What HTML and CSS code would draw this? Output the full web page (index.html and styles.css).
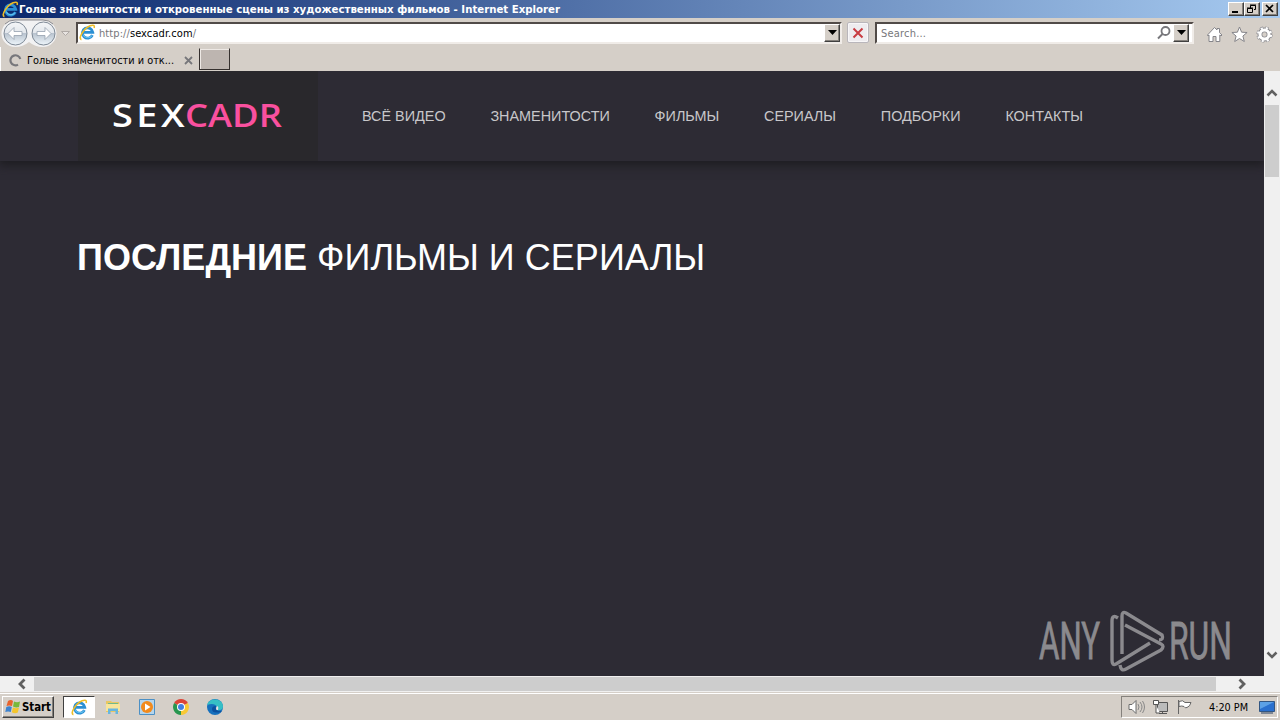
FILE: index.html
```html
<!DOCTYPE html>
<html lang="ru">
<head>
  <meta charset="UTF-8" />
  <title>Голые знаменитости и откровенные сцены из художественных фильмов</title>
  <link rel="stylesheet" href="styles.css">
</head>
<body>
  <svg class="sprite" width="0" height="0">
    <symbol id="ie" viewBox="0 0 16 16">
      <path d="M12.6 10.5A4.9 4.9 0 1 1 13 7.9H4.6" fill="none" stroke="#2b8fd3" stroke-width="2.6"/>
      <path d="M12.3 10.8A4.7 4.7 0 0 1 4 10" fill="none" stroke="#63c1ef" stroke-width="1"/>
      <path d="M2.3 14.7C-1.3 13.8 4.4 4.3 10.5 1.7c3.2-1.3 4.4-.4 3.7 2.1" fill="none" stroke="#edbd27" stroke-width="1.5"/>
    </symbol>
    <symbol id="down" viewBox="0 0 9 5"><path d="M0 0h9L4.500 5z"/></symbol>
  </svg>

  <div class="titlebar">
    <svg class="ie-icon" width="17" height="17"><use href="#ie"/></svg>
    <span class="window-title"><svg width="542" height="16"><text x="0" y="12" textLength="541" lengthAdjust="spacingAndGlyphs">Голые знаменитости и откровенные сцены из художественных фильмов - Internet Explorer</text></svg></span>
    <div class="window-buttons">
      <button><svg width="12" height="10"><path d="M2 8h6" stroke="#000" stroke-width="2"/></svg></button>
      <button><svg width="12" height="10"><path d="M4.500 4V1.500h5v4H8M4 1h6M1.500 4.500h5v4h-5zM1 4h6" fill="none" stroke="#000"/></svg></button>
      <button class="close"><svg width="12" height="10"><path d="M2 1l7 7M9 1L2 8" stroke="#000" stroke-width="1.7"/></svg></button>
    </div>
  </div>

  <div class="toolbar">
    <svg class="history" width="76" height="29" viewBox="0 0 76 29">
      <defs>
        <linearGradient id="glass" x2="0" y2="1"><stop stop-color="#f4f6f8"/><stop offset=".48" stop-color="#e3e7ec"/><stop offset=".5" stop-color="#b9c3cf"/><stop offset="1" stop-color="#eef6fb"/></linearGradient>
      </defs>
      <path d="M15 2h28a13 13 0 0 1 0 27q-8 0-14-5q-6 5-14 5a13 13 0 0 1 0-27z" fill="#f2f2f3"/>
      <path d="M5 6q4-4 10-4h28q6 0 10 4" fill="none" stroke="#8b8b91"/>
      <circle cx="15.500" cy="15.500" r="11.500" fill="url(#glass)" stroke="#7e8996"/>
      <circle cx="43.500" cy="15.500" r="11.500" fill="url(#glass)" stroke="#7e8996"/>
      <path d="M8 15.500l6-6v4h8v4h-8v4zM51 15.500l-6-6v4h-8v4h8v4z" fill="#fff" stroke="#96a1ae" stroke-width=".8"/>
      <path d="M61.500 13.500h8l-4 4z" fill="#e8e4e1" stroke="#b0aaa6"/>
    </svg>
    <div class="field address">
      <svg width="17" height="17"><use href="#ie"/></svg>
      <svg class="url" width="98" height="16"><text x="0" y="12" textLength="97"><tspan fill="#77777b">http://</tspan>sexcadr.com<tspan fill="#77777b">/</tspan></text></svg>
      <button class="drop"><svg width="9" height="5"><use href="#down"/></svg></button>
    </div>
    <button class="stop"><svg width="12" height="12"><path d="M1.500 1.500l9 9M10.500 1.500l-9 9" stroke="#c83c42" stroke-width="2"/></svg></button>
    <div class="field search">
      <svg class="hint" width="47" height="16"><text x="1" y="12" textLength="45">Search...</text></svg>
      <svg class="lens" width="14" height="14"><circle cx="8.500" cy="5" r="4" fill="none" stroke="#77777b" stroke-width="1.800"/><path d="M5.500 8L1 12.500" stroke="#77777b" stroke-width="2"/></svg>
      <button class="drop"><svg width="9" height="5"><use href="#down"/></svg></button>
    </div>
    <div class="tools">
      <svg width="17" height="17" viewBox="0 0 17 17"><path d="M1.500 9L8.500 1.500 11 4V2.500h2.500v4.200L16 9l-1 1-1.200-1V15.500H10v-5H7v5H3V9l-1 1z" fill="#fff" stroke="#85858a"/></svg>
      <svg width="17" height="17" viewBox="0 0 17 17"><path d="M8.500 1l2.100 5.200 5.500.3-4.200 3.500 1.400 5.500-4.800-3-4.800 3 1.400-5.500L.9 6.500l5.500-.3z" fill="#fff" stroke="#85858a"/></svg>
      <svg width="17" height="17" viewBox="0 0 17 17"><g fill="none"><circle cx="8.500" cy="8.500" r="6.300" stroke="#8b8b90" stroke-width="3.600" stroke-dasharray="3 1.948"/><circle cx="8.500" cy="8.500" r="4.600" stroke="#8b8b90" stroke-width="4.800"/><circle cx="8.500" cy="8.500" r="6.300" stroke="#fff" stroke-width="2.600" stroke-dasharray="2 2.948" stroke-dashoffset="-.5"/><circle cx="8.500" cy="8.500" r="4.500" stroke="#fff" stroke-width="3"/></g></svg>
    </div>
  </div>

  <div class="tabs">
    <div class="tab">
      <svg width="13" height="13"><path d="M9 10.600A5 5 0 1 1 11.300 5" fill="none" stroke="#77777b" stroke-width="2.200"/></svg>
      <svg class="tab-title" width="149" height="16"><text x="0" y="12" textLength="147" lengthAdjust="spacingAndGlyphs">Голые знаменитости и отк...</text></svg>
      <svg class="tab-close" width="9" height="9"><path d="M1 1l7 7M8 1L1 8" stroke="#77777b" stroke-width="1.800"/></svg>
    </div>
    <div class="new-tab"></div>
  </div>

  <div class="viewport">
    <main class="page">
      <header>
        <a class="logo" href="#">
          <svg width="174" height="50">
            <text class="white" x="-2" y="35" textLength="76" lengthAdjust="spacingAndGlyphs">SEX</text>
            <text class="pink" x="71" y="35" textLength="97" lengthAdjust="spacingAndGlyphs">CADR</text>
          </svg>
        </a>
        <nav>
          <a href="#">ВСЁ ВИДЕО</a>
          <a href="#">ЗНАМЕНИТОСТИ</a>
          <a href="#">ФИЛЬМЫ</a>
          <a href="#">СЕРИАЛЫ</a>
          <a href="#">ПОДБОРКИ</a>
          <a href="#">КОНТАКТЫ</a>
        </nav>
      </header>
      <h1><b>ПОСЛЕДНИЕ</b> ФИЛЬМЫ И СЕРИАЛЫ</h1>
      <svg class="watermark" width="200" height="68" viewBox="0 0 200 68">
        <g class="brand">
          <text x="1" y="51" textLength="61" lengthAdjust="spacingAndGlyphs">ANY</text>
          <text x="131" y="51" textLength="63" lengthAdjust="spacingAndGlyphs">RUN</text>
        </g>
        <g fill="none" stroke="#8b8a8e" stroke-width="3.400" stroke-linejoin="round">
          <path d="M80 10Q74 6 74 13v39q0 6 4 4l34-21"/>
          <path d="M84 46V8q0-5 4-3l36 22q2 5-3 5"/>
          <path d="M87 17l36 19q4 2 0 6L88 61q-5 3-6-4"/>
        </g>
      </svg>
    </main>
    <div class="vscroll">
      <svg width="12" height="8"><path d="M1.500 6.500L6 2l4.500 4.500" fill="none" stroke="#606060" stroke-width="2.500"/></svg>
      <div class="thumb"></div>
      <svg class="last" width="12" height="8"><path d="M1.500 1.500L6 6l4.500-4.500" fill="none" stroke="#606060" stroke-width="2.500"/></svg>
    </div>
  </div>
  <div class="hscroll">
    <svg width="9" height="12"><path d="M7.500 1.500L3 6l4.500 4.500" fill="none" stroke="#606060" stroke-width="2.800"/></svg>
    <div class="thumb"></div>
    <svg class="last" width="9" height="12"><path d="M1.500 1.500L6 6l-4.500 4.500" fill="none" stroke="#606060" stroke-width="2.800"/></svg>
  </div>

  <div class="taskbar">
    <button class="start">
      <svg width="16" height="16" viewBox="0 0 16 16"><path d="M3 2q3-2 5 0L7 7Q4 6 1.500 7z" fill="#e8632c"/><path d="M9 2.500q3 1.500 6 0L14 8q-3 1-6-.5z" fill="#78b83b"/><path d="M1.300 8q3-1.500 5.500 0l-1 5Q3 12 .3 13z" fill="#3d83cf"/><path d="M8 8.500q3 1.500 6 0l-1.200 5Q10 15 6.800 13.300z" fill="#f4c52c"/></svg>
      <svg width="30" height="15"><text x="0" y="11" textLength="29" lengthAdjust="spacingAndGlyphs">Start</text></svg>
    </button>
    <div class="task active"><svg width="17" height="17"><use href="#ie"/></svg></div>
    <div class="task"><svg width="16" height="16" viewBox="0 0 16 16"><path d="M1 2h5l1 1h7v10H1z" fill="#e9c762"/><path d="M3 4h10v4H3z" fill="#71b98b"/><path d="M1 5h14v7H1z" fill="#f8e59b"/><path d="M3 15V9.500h10V15h-2.500v-3h-5v3z" fill="#68b6df"/></svg></div>
    <div class="task"><svg width="16" height="16" viewBox="0 0 16 16"><path d="M.5.5h15v15H.5z" fill="#b5d5ec" stroke="#4c90c5"/><circle cx="8" cy="8" r="6" fill="#f28a1c"/><path d="M6 4.500v7L11.500 8z" fill="#fff"/></svg></div>
    <div class="task"><svg width="16" height="16" viewBox="0 0 16 16"><path d="M8 8L1.100 4A8 8 0 0 1 14.900 4z" fill="#dc4437"/><path d="M8 8l6.900-4A8 8 0 0 1 8 16z" fill="#f8c935"/><path d="M8 8v8A8 8 0 0 1 1.100 4z" fill="#28964f"/><circle cx="8" cy="8" r="4" fill="#fff"/><circle cx="8" cy="8" r="3" fill="#427fe2"/></svg></div>
    <div class="task"><svg width="16" height="16" viewBox="0 0 16 16"><circle cx="8" cy="8" r="8" fill="#1670bd"/><path d="M.3 6C1-1 16-2 16 8q-1 4-6 3 1-1 .5-3Q7 3 .3 6" fill="#36bfc5"/><path d="M9 7q-2 6 6 5l-1 1Q5 15 5 10q0-3 4-3z" fill="#0b4f9d"/><path d="M9.500 11q-1-2 0-3.500Q12 6.500 11 11z" fill="#e8e2df"/></svg></div>

    <div class="tray">
      <svg width="17" height="16" viewBox="0 0 17 16"><path d="M1 5.500h3l4-4v13l-4-4H1z" fill="#fff" stroke="#6b6b6b"/><path d="M10 5q2 3 0 6M12 3q4 5 0 10M14.500 2q4 6 0 12" fill="none" stroke="#888"/></svg>
      <svg width="17" height="16" viewBox="0 0 17 16"><path d="M5.500 3.500h10v9h-10z" fill="#bbb" stroke="#555"/><path d="M7 14.500h8M10.500 12v3M1.500 1.500h5v4h-5zM4 6v8h4" fill="#fff" stroke="#555"/></svg>
      <svg width="17" height="16" viewBox="0 0 17 16"><path d="M2.500 1v14M3 2.500q4-2 6 1h6q-1 4-4 5-2 1-3-1-2-1-5 0z" fill="#fff" stroke="#666"/></svg>
      <svg class="clock" width="41" height="15"><text x="1" y="11" textLength="39" lengthAdjust="spacingAndGlyphs">4:20 PM</text></svg>
      <svg width="16" height="13" viewBox="0 0 16 13"><path d="M.5.5h15v10H.5z" fill="#2a70ce" stroke="#325682"/><path d="M1 1h14L1 8z" fill="#5ca1e6"/><path d="M2 12h12" stroke="#263f60"/></svg>
    </div>
  </div>
</body>
</html>
```
FILE: styles.css
```css
* {
  box-sizing: border-box;
}
body {
  margin: 0;
  width: 1280px;
  height: 720px;
  overflow: hidden;
  display: flex;
  flex-direction: column;
  background: #d5cfc8;
  font-family: "DejaVu Sans Condensed", "DejaVu Sans", sans-serif;
  font-size: 11px;
}
svg {
  display: block;
  flex: none;
}
.sprite {
  position: absolute;
}
button {
  padding: 0;
  border: 1px solid;
  border-color: #fff #404040 #404040 #fff;
  box-shadow: inset -1px -1px #85817c;
  background: #d5cfc8;
  display: flex;
  align-items: center;
  justify-content: center;
}

/* Window chrome */
.titlebar {
  height: 18px;
  display: flex;
  align-items: center;
  padding: 0 2px;
  background: linear-gradient(90deg, #0b286d, #a6caf0);
}
.window-title {
  font-weight: bold;
  fill: #fff;
}
.window-buttons {
  display: flex;
  margin-left: auto;
}
.window-buttons button {
  width: 16px;
  height: 14px;
}
.window-buttons .close {
  margin-left: 2px;
}
.toolbar {
  height: 29px;
  display: flex;
  align-items: center;
}
.field {
  height: 22px;
  display: flex;
  align-items: center;
  background: #fff;
  border: 2px solid;
  border-color: #514b48 #f0ece8 #f0ece8 #514b48;
}
.address {
  width: 766px;
  padding-left: 1px;
}
.url {
  margin-left: 3px;
}
.drop {
  width: 16px;
  height: 18px;
  margin-left: auto;
}
.stop {
  width: 22px;
  height: 21px;
  margin: 0 6px 0 5px;
  background: #eeecef;
  border: 1px solid #b9b6bb;
  border-radius: 2px;
  box-shadow: inset 0 0 0 1px #f8f7f8;
}
.search {
  width: 319px;
  padding: 0 3px 0 3px;
}
.hint {
  fill: #77777b;
}
.lens {
  margin-left: auto;
}
.search .drop {
  margin-left: 2px;
}
.tools {
  display: flex;
  gap: 8px;
  margin: 4px 0 0 12px;
}
.tabs {
  height: 24px;
  display: flex;
}
.tab {
  width: 199px;
  display: flex;
  align-items: center;
  padding: 2px 6px 0 8px;
  border-left: 1px solid #fff;
}
.tab-title {
  margin-left: 5px;
}
.tab-close {
  margin-left: auto;
}
.new-tab {
  width: 31px;
  height: 22px;
  margin-top: 1px;
  background: #bdb5b0;
  border: 1px solid #35302e;
  border-top-color: #d5cfc8;
  box-shadow: inset 1px 1px #eee9e5;
}

/* Site */
.viewport {
  height: 605px;
  display: flex;
}
.page {
  position: relative;
  width: 1264px;
  background: #2d2b34;
  overflow: hidden;
  font-family: "Liberation Sans", Arial, sans-serif;
}
header {
  height: 90px;
  display: flex;
  padding-left: 78px;
  box-shadow: 0 2px 10px 2px #1d1c20;
}
.logo {
  width: 240px;
  padding: 21px 0 0 36px;
  background: #29282c;
  font: 600 33px "Open Sans", sans-serif;
}
.logo svg {
  overflow: visible;
}
.white {
  fill: #fff;
  letter-spacing: 3px;
}
.pink {
  fill: #f9509f;
}
nav {
  display: flex;
  align-items: center;
  gap: 44.8px;
  padding-left: 44px;
}
nav a {
  color: #c8c7ca;
  font-size: 14.4px;
  text-decoration: none;
  white-space: nowrap;
}
h1 {
  margin: 76px 0 0 77px;
  color: #fff;
  font-size: 36px;
  font-weight: normal;
  line-height: 42px;
  letter-spacing: 0.03px;
}
/* sits over the page in the corner */
.watermark {
  position: absolute;
  right: 26px;
  bottom: 0;
}
.brand {
  fill: #8b8a8e;
  stroke: #8b8a8e;
  stroke-width: 0.8px;
  font: 51px Roboto, sans-serif;
}

/* Scrollbars */
.vscroll {
  width: 16px;
  display: flex;
  flex-direction: column;
  align-items: center;
  padding: 18px 0 17px;
  background: #f0f0f0;
}
.vscroll .thumb {
  width: 14px;
  height: 72px;
  margin-top: 8px;
  background: #cdcdcd;
}
.vscroll .last {
  margin-top: auto;
}
.hscroll {
  height: 16px;
  display: flex;
  align-items: center;
  padding: 0 33px 0 17px;
  background: #f0f0f0;
}
.hscroll .thumb {
  width: 1182px;
  height: 14px;
  margin-left: 8px;
  background: #cdcdcd;
}
.hscroll .last {
  margin-left: auto;
}

/* Taskbar */
.taskbar {
  height: 28px;
  display: flex;
  align-items: center;
  padding: 1px 2px 0;
  border-top: 1px solid #d5cfc8;
  box-shadow: inset 0 1px #fff;
}
.start {
  width: 52px;
  height: 22px;
  margin-right: 9px;
  gap: 1px;
  font: bold 12px "DejaVu Sans Condensed", sans-serif;
}
.task {
  width: 34px;
  height: 22px;
  display: flex;
  align-items: center;
  justify-content: center;
}
.active {
  width: 32px;
  margin-right: 1px;
  background: #fff;
  border: 1px solid;
  border-color: #404040 #fff #fff #404040;
}
.tray {
  width: 157px;
  height: 22px;
  margin-left: auto;
  padding: 0 2px 0 6px;
  display: flex;
  align-items: center;
  gap: 7px;
  border: 1px solid;
  border-color: #85817c #fff #fff #85817c;
}
.clock {
  margin: 0 3px 0 auto;
}
```
